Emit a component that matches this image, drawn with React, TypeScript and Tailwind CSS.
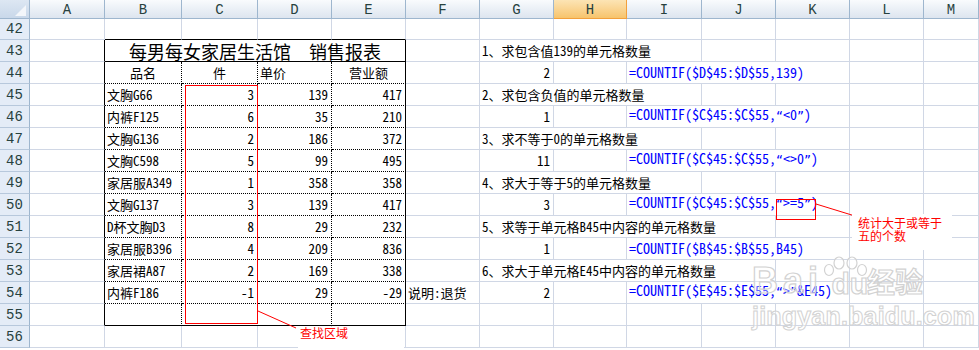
import React from "react";

type Kind = "g" | "aL" | "top" | "title" | "in" | "inE" | "botIn" | "botE";
const BORDER: Record<Kind, string> = {
  g: "border-r border-b border-[#d0d7e5]",
  aL: "border-r border-b border-b-[#d0d7e5] border-r-black",
  top: "border-r border-b border-r-[#d0d7e5] border-b-black",
  title: "border-r border-b border-black",
  in: "border-r border-b border-black border-dotted",
  inE: "border-r border-b border-black border-dotted [border-right-style:solid]",
  botIn: "border-r border-b border-black border-dotted [border-bottom-style:solid]",
  botE: "border-r border-b border-black",
};
const SPAN: Record<number, string> = { 1: "", 2: "col-span-2", 3: "col-span-3", 4: "col-span-4" };
const ALIGN: Record<string, string> = {
  l: "justify-start pl-[2px]",
  r: "justify-end pr-[3px]",
  c: "justify-center",
};

type C = { t?: string; k?: Kind; s?: number; a?: "l" | "r" | "c"; f?: boolean; title?: boolean };

const BODY = "font-['Noto_Sans_Mono_CJK_SC','Noto_Sans_CJK_SC',sans-serif] text-[13px] leading-[16px] pb-[2px] text-black";
const FORMULA = "font-['Noto_Sans_Mono_CJK_SC','DejaVu_Sans_Mono',monospace] text-[14px] leading-[16px] pb-[3px] text-[#0000ff]";
const TITLE = "font-['Noto_Sans_CJK_SC',sans-serif] text-[18px] leading-[20px] text-black";

const COLS = ["A", "B", "C", "D", "E", "F", "G", "H", "I", "J", "K", "L", "M"];

const data: string[][] = [
  ["文胸G66", "3", "139", "417"],
  ["内裤F125", "6", "35", "210"],
  ["文胸G136", "2", "186", "372"],
  ["文胸C598", "5", "99", "495"],
  ["家居服A349", "1", "358", "358"],
  ["文胸G137", "3", "139", "417"],
  ["D杯文胸D3", "8", "29", "232"],
  ["家居服B396", "4", "209", "836"],
  ["家居裙A87", "2", "169", "338"],
  ["内裤F186", "-1", "29", "-29"],
];

const blank = (n: number): C[] => Array.from({ length: n }, () => ({}));

const question = (t: string, span: number): C[] => [{}, { t, s: span, a: "l" }, ...blank(8 - 1 - span)];
const answer = (n: string, formula: string, f?: string): C[] => [
  f ? { t: f, a: "l" } : {},
  { t: n, a: "r" },
  {},
  { t: formula, s: 3, a: "l", f: true },
  {},
  {},
];

const right: Record<number, C[]> = {
  42: blank(8),
  43: question("1、求包含值139的单元格数量", 3),
  44: answer("2", "=COUNTIF($D$45:$D$55,139)"),
  45: question("2、求包含负值的单元格数量", 3),
  46: answer("1", "=COUNTIF($C$45:$C$55,“<0”)"),
  47: question("3、求不等于0的单元格数量", 3),
  48: answer("11", "=COUNTIF($C$45:$C$55,“<>0”)"),
  49: question("4、求大于等于5的单元格数量", 3),
  50: answer("3", "=COUNTIF($C$45:$C$55,“>=5”)"),
  51: question("5、求等于单元格B45中内容的单元格数量", 4),
  52: answer("1", "=COUNTIF($B$45:$B$55,B45)"),
  53: question("6、求大于单元格E45中内容的单元格数量", 4),
  54: answer("2", "=COUNTIF($E$45:$E$55,“>”&E45)", "说明:退货"),
  55: blank(8),
  56: blank(8),
};

function left(r: number): C[] {
  if (r === 42) return [{}, { k: "top" }, { k: "top" }, { k: "top" }, { k: "top" }];
  if (r === 56) return blank(5);
  if (r === 43) return [{ k: "aL" }, { k: "title", s: 4, t: "每男每女家居生活馆　销售报表", title: true }];
  if (r === 44)
    return [
      { k: "aL" },
      { k: "in", t: "品名", a: "c" },
      { k: "in", t: "件", a: "c" },
      { k: "in", t: "单价", a: "l" },
      { k: "inE", t: "营业额", a: "c" },
    ];
  if (r === 55) return [{ k: "aL" }, { k: "botIn" }, { k: "botIn" }, { k: "botIn" }, { k: "botE" }];
  const d = data[r - 45];
  return [
    { k: "aL" },
    { k: "in", t: d[0], a: "l" },
    { k: "in", t: d[1], a: "r" },
    { k: "in", t: d[2], a: "r" },
    { k: "inE", t: d[3], a: "r" },
  ];
}

function formulaText(t: string) {
  const parts = t.split(/([“”])/);
  return parts.map((p, i) =>
    p === "“" || p === "”" ? (
      <span key={i} className="font-['DejaVu_Sans_Mono',monospace] text-[11.63px]">
        {p}
      </span>
    ) : (
      <React.Fragment key={i}>{p}</React.Fragment>
    )
  );
}

function Cell({ c }: { c: C }) {
  const cls = [
    "flex items-end whitespace-nowrap min-w-0 overflow-visible",
    BORDER[c.k ?? "g"],
    SPAN[c.s ?? 1],
    c.title ? "justify-center" : ALIGN[c.a ?? "l"],
    c.title ? TITLE : c.f ? FORMULA : BODY,
  ].join(" ");
  return <div className={cls}>{c.t ? (c.f ? <span>{formulaText(c.t)}</span> : c.t) : ""}</div>;
}

const ROWS = Array.from({ length: 15 }, (_, i) => 42 + i);

const WM = "text-white/40 [-webkit-text-stroke:1.2px_#d2d2d2]";

function Watermark() {
  return (
    <div className="absolute left-[752px] top-[256px] w-[176px] flex flex-col pointer-events-none select-none">
      <div className="flex items-end h-[40px]">
        <span className={"font-['Liberation_Sans',sans-serif] font-bold text-[36px] leading-[30px] tracking-[5px] " + WM}>
          Bai
        </span>
        <div className="relative -ml-[3px] w-[50px] h-[40px] flex items-end justify-end pr-[2px]">
          <svg className="absolute left-0 top-0" width="50" height="22" viewBox="0 0 50 22">
            <g fill="rgba(255,255,255,0.4)" stroke="#d2d2d2" strokeWidth="1.2">
              <ellipse cx="9" cy="14" rx="4.5" ry="5.5" />
              <ellipse cx="19" cy="7" rx="5" ry="6" />
              <ellipse cx="32" cy="7" rx="5" ry="6" />
              <ellipse cx="42" cy="14" rx="4.5" ry="5.5" />
            </g>
          </svg>
          <span className={"relative font-['Liberation_Sans',sans-serif] font-bold text-[30px] leading-[24px] " + WM}>du</span>
        </div>
        <span className={"-ml-[3px] font-['Noto_Sans_CJK_SC',sans-serif] font-bold text-[28px] leading-[30px] " + WM}>
          经验
        </span>
      </div>
      <span className="mt-[8px] font-['Liberation_Sans',sans-serif] font-bold text-[25px] leading-[24px] tracking-[0.2px] text-white/40 [-webkit-text-stroke:1px_#d2d2d2]">
        jingyan.baidu.com
      </span>
    </div>
  );
}

export default function App() {
  return (
    <div className="relative w-[979px] h-[350px] overflow-hidden bg-white">
      <div className="grid grid-cols-[30px_75px_77px_76px_74px_74px_74px_74px_73px_75px_74px_74px_74px_1fr] grid-rows-[19px_21px_repeat(14,22px)]">
        {/* corner */}
        <div className="flex items-end justify-end pr-[3px] pb-[2px] border-r border-b border-[#9eb6ce] bg-linear-to-b from-[#dde7f3] to-[#c9d8ea]">
          <svg width="11" height="11" viewBox="0 0 11 11">
            <polygon points="11,0 11,11 0,11" fill="#f3f6fa" />
          </svg>
        </div>
        {COLS.map((c) =>
          c === "H" ? (
            <div
              key={c}
              className="flex items-center justify-center border-r border-b border-[#f2a03c] bg-linear-to-b from-[#fce4b4] to-[#f7c46c] font-['Liberation_Mono',monospace] text-[14px] leading-none text-[#27413e] pt-[1px]"
            >
              {c}
            </div>
          ) : (
            <div
              key={c}
              className="flex items-center justify-center border-r border-b border-[#9eb6ce] bg-linear-to-b from-[#f9fbfd] to-[#dde5ef] font-['Liberation_Mono',monospace] text-[14px] leading-none text-[#27413e] pt-[1px]"
            >
              {c}
            </div>
          )
        )}
        {ROWS.map((r) => (
          <React.Fragment key={r}>
            <div className="flex items-end justify-center pb-[2px] border-r border-b border-r-[#9eb6ce] border-b-[#b7c8dc] bg-[#e4ecf7] font-['Liberation_Mono',monospace] text-[14px] leading-[16px] text-[#27413e]">
              {r}
            </div>
            {[...left(r), ...right[r]].map((c, i) => (
              <Cell key={i} c={c} />
            ))}
          </React.Fragment>
        ))}
      </div>

      {/* search area rectangle */}
      <div className="absolute left-[185px] top-[85px] w-[73px] h-[239px] border border-[#ff0000]" />
      {/* box around ">=5" */}
      <div className="absolute left-[776px] top-[199px] w-[40px] h-[21px] border border-[#ff0000]" />
      {/* leader lines */}
      <svg className="absolute left-0 top-0 pointer-events-none" width="979" height="350">
        <line x1="258" y1="311" x2="296" y2="328" stroke="#ff0000" strokeWidth="1" />
        <line x1="816" y1="204" x2="855" y2="216" stroke="#ff0000" strokeWidth="1" />
      </svg>
      {/* callout text boxes */}
      <div className="absolute left-[298px] top-[327px] w-[106px] h-[23px] bg-white pl-[2px] font-['Noto_Sans_CJK_SC',sans-serif] text-[12px] leading-[12px] text-[#ff0000]">
        查找区域
      </div>
      <div className="absolute left-[852px] top-[214px] w-[100px] h-[36px] bg-white pl-[6px] pt-[2px] flex flex-col font-['Noto_Sans_CJK_SC',sans-serif] text-[12px] leading-[13px] text-[#ff0000]">
        <span>统计大于或等于</span>
        <span>五的个数</span>
      </div>

      <Watermark />
    </div>
  );
}
